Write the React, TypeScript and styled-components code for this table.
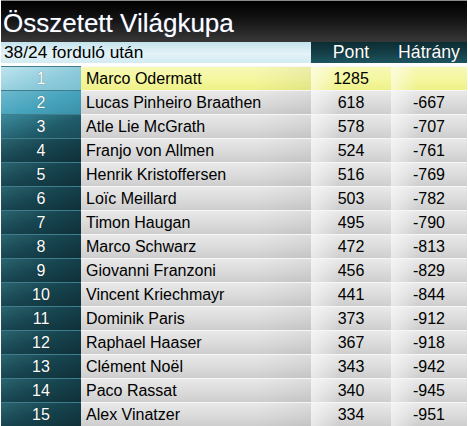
import styled, { createGlobalStyle, css } from "styled-components";

const GlobalStyle = createGlobalStyle`
  html, body {
    margin: 0;
    padding: 0;
    background: #ffffff;
  }
  body {
    font-family: "Liberation Sans", Arial, sans-serif;
  }
  * {
    box-sizing: border-box;
  }
`;

const Container = styled.main`
  width: 467px;
  padding-left: 1px;
  display: flex;
  flex-direction: column;
`;

const TitleBar = styled.header`
  height: 42px;
  display: flex;
  align-items: flex-end;
  padding-left: 2px;
  border-top: 1px solid #8a8a8a;
  background: linear-gradient(to bottom, #000000 0%, #141414 45%, #383838 100%);

  h1 {
    margin: 0 0 4px;
    font-weight: 400;
    font-size: 26px;
    line-height: 30px;
    color: #ffffff;
    text-shadow: 0 0 1px rgba(120, 160, 255, 0.6);
  }
`;

const Grid = styled.section`
  display: grid;
  grid-template-columns: 80px 230px 80px 76px;
  grid-auto-rows: 24px;
`;

const Row = styled.div`
  display: contents;
`;

const RoundCell = styled.div`
  grid-column: span 2;
  height: 21px;
  display: flex;
  align-items: center;
  padding-left: 3px;
  font-size: 17.3px;
  color: #000;
  background: linear-gradient(to bottom, #c4e3ec 0%, #e4f3f7 55%, #d2ebf2 100%);
`;

const ColHead = styled.div`
  height: 21px;
  display: flex;
  align-items: center;
  justify-content: center;
  font-size: 17.7px;
  color: #ffffff;
  text-shadow: 0 0 1px rgba(0, 0, 0, 0.6);
  background: linear-gradient(to bottom, #0c2d33 0%, #143e46 50%, #1e5560 100%);
`;

type Tier = 1 | 2 | 3 | 4;

const rankBg: Record<Tier, string> = {
  1: "linear-gradient(160deg, #bde4ee 0%, #8ecbdb 60%, #7cc0d2 100%)",
  2: "linear-gradient(160deg, #6cb9cd 0%, #46a3bc 55%, #3a90a8 100%)",
  3: "linear-gradient(160deg, #3b8b9d 0%, #205b69 60%, #1a4c58 100%)",
  4: "linear-gradient(160deg, #2a6470 0%, #174550 45%, #0f3038 100%)",
};

const RankCell = styled.div<{ $tier: Tier }>`
  display: flex;
  align-items: center;
  justify-content: center;
  border-top: 1px solid #3f7d8a;
  font-size: 16px;
  color: #ffffff;
  text-shadow: 0 0 1px rgba(0, 0, 0, 0.6);
  background: ${(p) => rankBg[p.$tier]};
`;

const grayBg = css`
  background: linear-gradient(to bottom, #e9e9e9 0%, #dcdcdc 50%, #cecece 100%);
`;
const yellowBg = css`
  background: linear-gradient(to bottom, #f8f9b6 0%, #f4f69c 60%, #eef087 100%);
`;

const Cell = styled.div<{ $leader?: boolean }>`
  position: relative;
  display: flex;
  align-items: center;
  border-top: 1px solid #f6f6f6;
  font-size: 16px;
  color: #000;
  white-space: nowrap;
  ${(p) => (p.$leader ? yellowBg : grayBg)}

  span {
    position: relative;
  }
`;

const NameCell = styled(Cell)`
  padding-left: 5px;

  &::after {
    content: "";
    position: absolute;
    inset: 0;
    background: linear-gradient(to right, rgba(0, 0, 0, 0) 75%, rgba(0, 0, 0, 0.05) 100%);
  }
`;

const NumCell = styled(Cell)`
  justify-content: center;

  &::before {
    content: "";
    position: absolute;
    inset: 0;
    background: linear-gradient(to right, rgba(255, 255, 255, 0.55) 0%, rgba(255, 255, 255, 0) 35%);
  }
`;

const standings: [string, number][] = [
  ["Marco Odermatt", 1285],
  ["Lucas Pinheiro Braathen", 618],
  ["Atle Lie McGrath", 578],
  ["Franjo von Allmen", 524],
  ["Henrik Kristoffersen", 516],
  ["Loïc Meillard", 503],
  ["Timon Haugan", 495],
  ["Marco Schwarz", 472],
  ["Giovanni Franzoni", 456],
  ["Vincent Kriechmayr", 441],
  ["Dominik Paris", 373],
  ["Raphael Haaser", 367],
  ["Clément Noël", 343],
  ["Paco Rassat", 340],
  ["Alex Vinatzer", 334],
];

const App = () => {
  const top = standings[0][1];
  return (
    <Container>
      <GlobalStyle />
      <TitleBar>
        <h1>Összetett Világkupa</h1>
      </TitleBar>
      <Grid>
        <Row>
          <RoundCell>38/24 forduló után</RoundCell>
          <ColHead>Pont</ColHead>
          <ColHead>Hátrány</ColHead>
        </Row>
        {standings.map(([name, pts], i) => {
          const leader = i === 0;
          const tier = Math.min(i + 1, 4) as Tier;
          return (
            <Row key={name}>
              <RankCell $tier={tier}>{i + 1}</RankCell>
              <NameCell $leader={leader}>
                <span>{name}</span>
              </NameCell>
              <NumCell $leader={leader}>
                <span>{pts}</span>
              </NumCell>
              <NumCell $leader={leader}>
                <span>{leader ? "" : pts - top}</span>
              </NumCell>
            </Row>
          );
        })}
      </Grid>
    </Container>
  );
};

export default App;
